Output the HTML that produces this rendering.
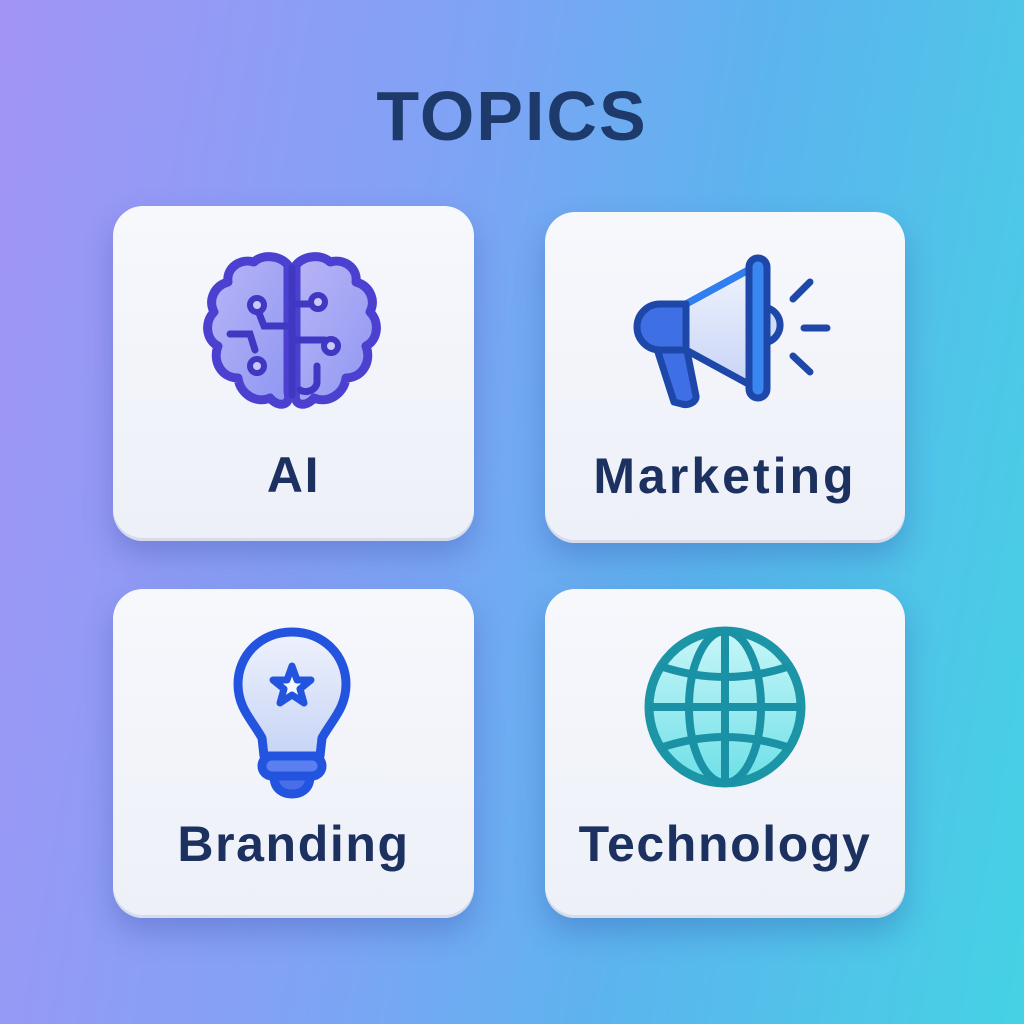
<!DOCTYPE html>
<html><head><style>
html,body{margin:0;padding:0}
body{width:1024px;height:1024px;position:relative;overflow:hidden;
background:linear-gradient(100deg,#a294f5 0%,#7fa3f5 40%,#5cb4ee 65%,#45d2e4 100%);
font-family:"Liberation Sans",sans-serif}
.t{position:absolute;left:0;width:1024px;top:76px;text-align:center;font-size:70px;font-weight:bold;color:#1d3a6a;letter-spacing:2px}
.c{position:absolute;background:linear-gradient(180deg,#f7f8fc,#edf0f8);border-radius:30px;
box-shadow:0 14px 30px rgba(40,60,150,.28),inset 0 -3px 0 rgba(200,205,225,.6)}
.l{position:absolute;width:100%;text-align:center;font-size:50px;font-weight:bold;color:#1d3160;letter-spacing:1.6px}
svg{position:absolute;left:0;top:0}
</style></head><body>
<div class="t">TOPICS</div>
<div class="c" style="left:113px;top:206px;width:361px;height:335px"><div class="l" style="top:240px">AI</div></div>
<div class="c" style="left:545px;top:212px;width:360px;height:331px"><div class="l" style="top:235px;letter-spacing:3px">Marketing</div></div>
<div class="c" style="left:113px;top:589px;width:361px;height:329px"><div class="l" style="top:226px">Branding</div></div>
<div class="c" style="left:545px;top:589px;width:360px;height:329px"><div class="l" style="top:226px">Technology</div></div>
<svg width="1024" height="1024" viewBox="0 0 1024 1024">
<defs>
<linearGradient id="bg1" x1="0" y1="0" x2="1" y2="1"><stop offset="0" stop-color="#b9b4f7"/><stop offset="1" stop-color="#8f97f2"/></linearGradient>
<linearGradient id="gl" x1="0" y1="0" x2="0" y2="1"><stop offset="0" stop-color="#c8f6f8"/><stop offset="1" stop-color="#6ee0e8"/></linearGradient>
<linearGradient id="bl" x1="0" y1="0" x2="0" y2="1"><stop offset="0" stop-color="#eef2fc"/><stop offset="1" stop-color="#c7d4f6"/></linearGradient>
</defs>
<g fill="url(#bg1)" stroke="#4b40d0" stroke-width="9" stroke-linecap="round" stroke-linejoin="round">
<path d="M288 265 C280 255 262 254 254 262 C240 258 226 268 228 282 C214 286 208 300 214 312 C204 322 206 340 218 346 C212 362 222 378 238 378 C240 394 256 404 270 398 C278 408 292 406 288 392 Z"/>
<path d="M296 265 C304 255 322 254 330 262 C344 258 358 268 356 282 C370 286 376 300 370 312 C380 322 378 340 366 346 C372 362 362 378 346 378 C344 394 328 404 314 398 C306 408 292 406 296 392 Z"/>
</g>
<g fill="none" stroke="#4038c2" stroke-width="7" stroke-linecap="round">
<line x1="292" y1="268" x2="292" y2="395"/>
<path d="M259 313 L264 326 L290 326"/><path d="M230 334 L250 334 L255 350"/>
<line x1="292" y1="304" x2="312" y2="304"/><line x1="292" y1="340" x2="325" y2="340"/>
<path d="M317 366 L317 382 C317 390 306 394 300 390"/>
</g>
<g fill="#c9c8f8" stroke="#4038c2" stroke-width="6">
<circle cx="257" cy="305" r="7"/><circle cx="257" cy="366" r="7"/><circle cx="318" cy="302" r="7"/><circle cx="331" cy="346" r="7"/>
</g>
<g stroke="#1d47a8" stroke-width="7" stroke-linejoin="round" stroke-linecap="round">
<path d="M656 346 L686 346 L696 396 C697 402 688 406 682 404 L674 402 Z" fill="#3f6fe4"/>
<path d="M686 304 L752 268 L752 386 L686 350 Z" fill="url(#bl)"/>
<path d="M686 304 L752 268" stroke="#2f7ff0"/>
<path d="M768 308 A18 18 0 0 1 768 342" fill="#cfdcf8"/>
<path d="M686 304 L660 304 A23 23 0 0 0 660 350 L686 350 Z" fill="#3f6fe4"/>
<rect x="749" y="258" width="18" height="140" rx="9" fill="#3a86f0"/>
</g>
<g stroke="#1d47a8" stroke-width="7" stroke-linecap="round">
<line x1="793" y1="299" x2="810" y2="282"/><line x1="804" y1="328" x2="827" y2="328"/><line x1="793" y1="356" x2="810" y2="372"/>
</g>
<g stroke="#2354e0" stroke-width="9" stroke-linejoin="round" stroke-linecap="round">
<path d="M292 632 C260 632 238 656 238 684 C238 708 252 720 262 738 L264 756 L320 756 L322 738 C332 720 346 708 346 684 C346 656 324 632 292 632 Z" fill="url(#bl)"/>
<rect x="262" y="756" width="60" height="20" rx="10" fill="#5b7ff0"/>
<path d="M274 776 L310 776 C310 790 300 794 292 794 C284 794 274 790 274 776 Z" fill="#4a6ee8"/>
<path d="M292 666 L297 680 L311 680 L300 689 L304 703 L292 695 L280 703 L284 689 L273 680 L287 680 Z" fill="#f6f8ff" stroke-width="7"/>
</g>
<g stroke="#1b91a6" stroke-width="8" fill="none">
<circle cx="725" cy="707" r="76" fill="url(#gl)" stroke="#1c95a6" stroke-width="9"/>
<line x1="725" y1="631" x2="725" y2="783"/>
<ellipse cx="725" cy="707" rx="36" ry="76"/>
<line x1="649" y1="707" x2="801" y2="707"/>
<path d="M660 666 Q725 688 790 666"/><path d="M660 748 Q725 726 790 748"/>
</g>
</svg>
</body></html>
